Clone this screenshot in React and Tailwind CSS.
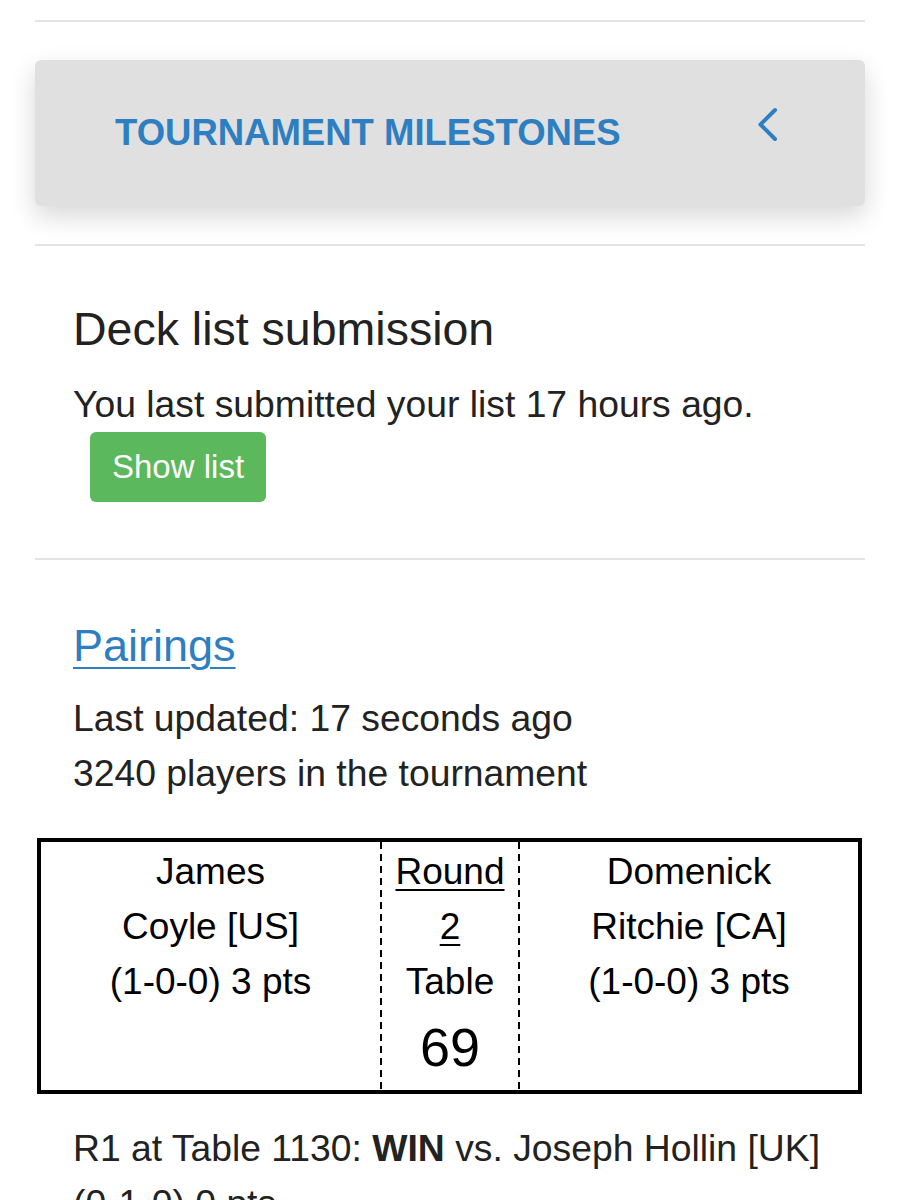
const ink = "text-[#222222]";

function Divider() {
  return <div className="h-[2px] bg-[#e4e4e4]" />;
}

function Chevron() {
  return (
    <svg width="23" height="37" viewBox="0 0 23 37" fill="none" aria-hidden="true">
      <path d="M19 4 L4.5 18.5 L19 33" stroke="#2d7fc1" strokeWidth="4" strokeLinecap="round" strokeLinejoin="round" />
    </svg>
  );
}

function DashedRule() {
  return <div className="bg-[repeating-linear-gradient(to_bottom,#000_0_7px,transparent_7px_12px)]" />;
}

function PlayerCell({ first, last, record }) {
  return (
    <div className="flex flex-col items-center pt-[2px] text-[37px] leading-[55px]">
      <span>{first}</span>
      <span>{last}</span>
      <span>{record}</span>
    </div>
  );
}

export default function App() {
  return (
    <div className={`w-[900px] min-h-[1200px] bg-white px-[35px] pt-[20px] font-['Liberation_Sans',Arial,sans-serif] ${ink}`}>
      <Divider />

      {/* collapsed accordion header */}
      <div className="mt-[38px] flex h-[146px] items-center justify-between rounded-[6px] bg-[#e0e0e0] pl-[80px] pr-[86px] shadow-[0_10px_26px_rgba(0,0,0,0.16)]">
        <span className="text-[36.5px] font-bold text-[#2d7fc1]">TOURNAMENT MILESTONES</span>
        <span className="mb-[18px]">
          <Chevron />
        </span>
      </div>

      <div className="mt-[38px]">
        <Divider />
      </div>

      <section className="pl-[38px]">
        <h2 className="mt-[56px] text-[46.5px] leading-[55px]">Deck list submission</h2>
        <p className="mt-[20px] text-[37.3px] leading-[55px]">You last submitted your list 17 hours ago.</p>
        <button
          type="button"
          className="ml-[17px] flex h-[70px] items-center rounded-[6px] bg-[#5cb85c] px-[22px] text-[33px] text-white"
        >
          Show list
        </button>
      </section>

      <div className="mt-[56px]">
        <Divider />
      </div>

      <section className="pl-[38px]">
        <h2 className="mt-[58px] text-[45px] leading-[55px]">
          <a href="#pairings" className="text-[#2d7fc1] underline decoration-2 underline-offset-[6px]">
            Pairings
          </a>
        </h2>
        <p className="mt-[18px] text-[37.3px] leading-[55px]">Last updated: 17 seconds ago</p>
        <p className="text-[37.3px] leading-[55px]">3240 players in the tournament</p>
      </section>

      <div className="mt-[37px] ml-[2px] mr-[3px] grid grid-cols-[339px_2px_136px_2px_1fr] border-[4px] border-black text-black">
        <PlayerCell first="James" last="Coyle [US]" record="(1-0-0) 3 pts" />
        <DashedRule />
        <div className="flex flex-col items-center pt-[2px] pb-[10px] text-[37px] leading-[55px]">
          <span className="underline decoration-2 underline-offset-[5px]">Round</span>
          <span className="underline decoration-2 underline-offset-[5px]">2</span>
          <span>Table</span>
          <span className="mt-[5px] text-[54px] leading-[66px]">69</span>
        </div>
        <DashedRule />
        <PlayerCell first="Domenick" last="Ritchie [CA]" record="(1-0-0) 3 pts" />
      </div>

      <p className="mt-[27px] pl-[38px] text-[37.3px] leading-[55px]">
        R1 at Table 1130: <strong className="font-bold">WIN</strong> vs. Joseph Hollin [UK] (0-1-0) 0 pts
      </p>
    </div>
  );
}
